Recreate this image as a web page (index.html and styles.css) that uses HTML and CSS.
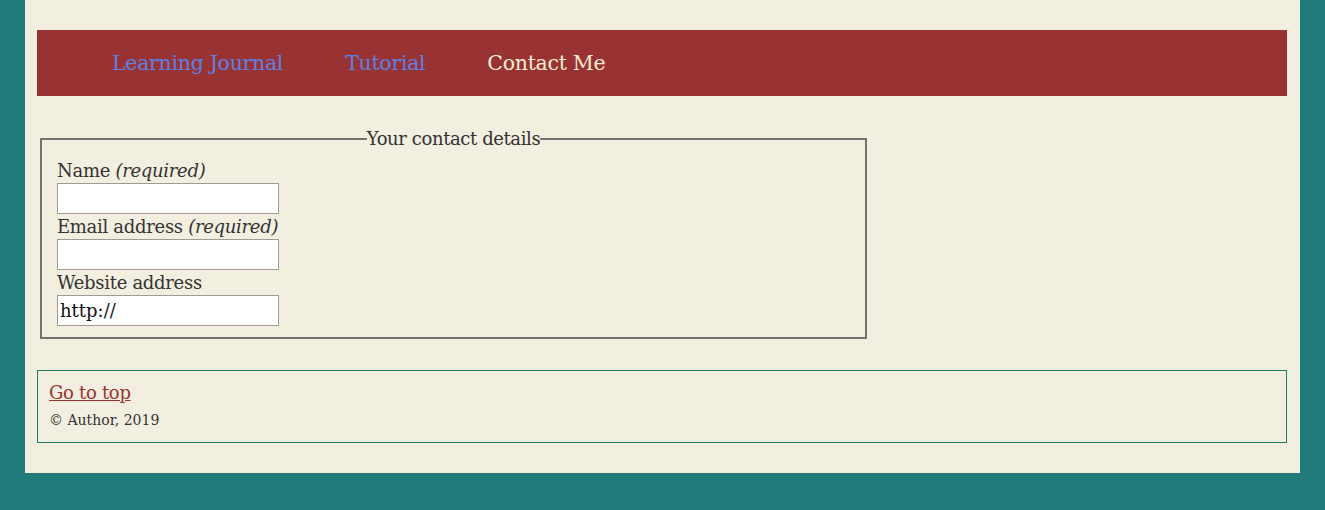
FILE: index.html
```html
<!DOCTYPE html>
<html lang="en">
<head>
<meta charset="utf-8">
<title>Contact Me</title>
<link rel="stylesheet" href="styles.css">
</head>
<body>
<div class="page">
  <nav class="nav">
    <a class="nav-link" href="#">Learning Journal</a>
    <a class="nav-link" href="#">Tutorial</a>
    <a class="nav-link current" href="#">Contact Me</a>
  </nav>
  <main class="main">
    <form class="contact-form">
      <fieldset class="details">
        <legend class="legend">Your contact details</legend>
        <label class="field-label" for="name">Name <em>(required)</em></label>
        <input class="field" id="name" type="text">
        <label class="field-label" for="email">Email address <em>(required)</em></label>
        <input class="field" id="email" type="email">
        <label class="field-label" for="web">Website address</label>
        <input class="field" id="web" type="text" value="http://">
      </fieldset>
    </form>
  </main>
  <footer class="footer">
    <a class="top-link" href="#">Go to top</a>
    <p class="copy">© Author, 2019</p>
  </footer>
</div>
</body>
</html>
```
FILE: styles.css
```css
html, body {
  margin: 0;
  padding: 0;
}
body {
  background: #207b7a;
  font-family: "DejaVu Serif", "Liberation Serif", serif;
  color: #333;
  height: 510px;
  overflow: hidden;
}
.page {
  margin: 0 25px;
  background: #f2eee0;
  padding: 30px 13px 30px 12px;
}
.nav {
  background: #993333;
  height: 66px;
  display: flex;
  align-items: center;
  padding-left: 75px;
  gap: 62px;
}
.nav-link {
  font-size: 20.5px;
  color: #5b80e6;
  text-decoration: none;
  letter-spacing: -0.3px;
}
.nav-link.current {
  color: #f7ecd6;
}
.main {
  padding: 32px 0 31px 3px;
}
.contact-form {
  margin: 0;
}
.details {
  width: 827px;
  box-sizing: border-box;
  margin: 0;
  border: 2px solid #747270;
  padding: 9px 15px 11px;
  display: flex;
  flex-direction: column;
  align-items: flex-start;
}
.legend {
  margin: 0 auto;
  padding: 0;
  font-size: 18px;
  color: #333;
  letter-spacing: -0.4px;
}
.field-label {
  font-size: 18px;
  line-height: 25px;
  color: #333;
  letter-spacing: -0.3px;
}
.field {
  width: 222px;
  height: 31px;
  box-sizing: border-box;
  border: 1px solid #a09a92;
  background: #fff;
  margin: 0;
  padding: 1px 2px;
  font-family: "DejaVu Serif", "Liberation Serif", serif;
  font-size: 18px;
  color: #111;
}
.footer {
  border: 1px solid #1f7a68;
  padding: 10px 11px 11px;
}
.top-link {
  font-size: 18px;
  color: #993333;
  text-decoration: underline;
  line-height: 24px;
  letter-spacing: -0.3px;
}
.copy {
  margin: 4px 0 0;
  font-size: 14px;
  line-height: 22px;
  color: #333;
}
```
